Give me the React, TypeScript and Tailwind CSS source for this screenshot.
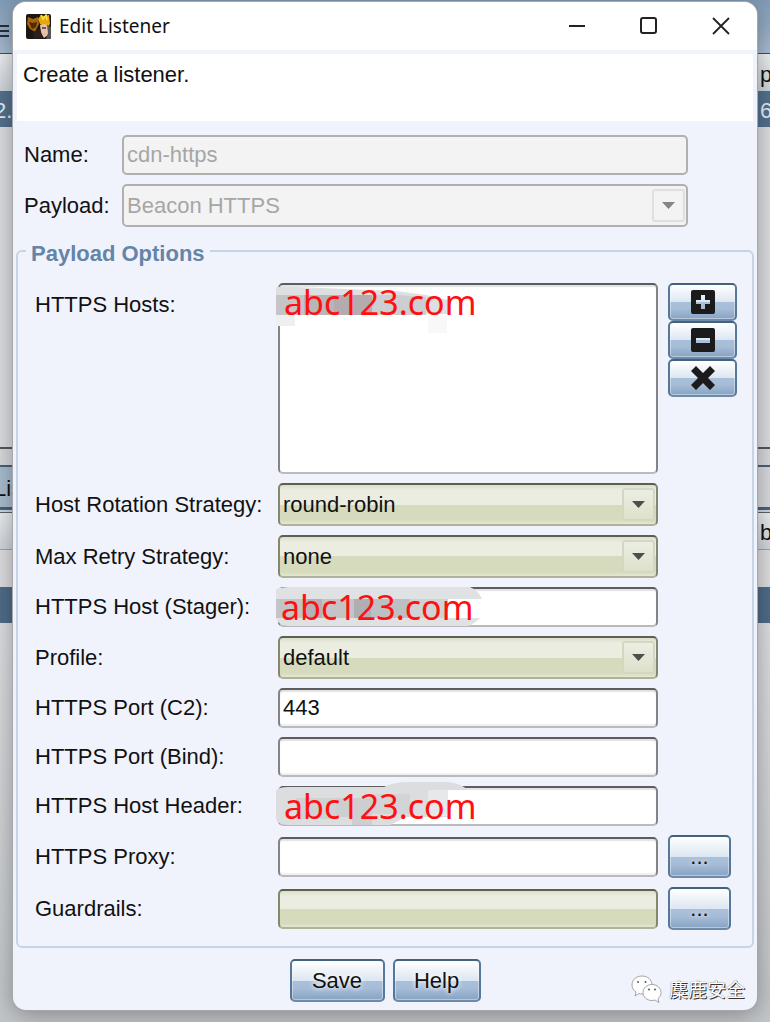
import { useState } from 'react'
import type { ReactNode } from 'react'
import clsx from 'clsx'

const fieldBorder = 'rounded-[5px] border-2 border-t-[#5c5d5f] border-x-[#838486] border-b-[#b9babc]'
const olive =
  'bg-[linear-gradient(#dcdfcd_0px,#eaeddf_5px,#eaeddf_50%,#d6dbbd_50%,#d6dbbd_90%,#e4e8d2_100%)]'
const oliveBorder = 'rounded-[5px] border-2 border-t-[#5d604f] border-x-[#84876f] border-b-[#b0b399]'
const glossy =
  'rounded-[5px] border-2 border-t-[#42627f] border-x-[#55779a] border-b-[#6e8aa8] bg-[linear-gradient(#ffffff_0%,#dce6f1_50%,#a9c0db_50%,#a6bcd7_70%,#86a3c3_100%)] shadow-[inset_0_0_0_1px_rgba(255,255,255,0.4)]'
const glow = '[text-shadow:0_0_4px_rgba(255,255,255,0.9),0_0_6px_rgba(255,255,255,0.7)]'

/* ─── Main window behind the dialog ─── */
interface BandProps {
  className: string
  left?: string
  right?: string
}

function Band({ className, left, right }: BandProps) {
  return (
    <div className={clsx('flex shrink-0 items-center justify-between whitespace-nowrap', className)}>
      <span className="-ml-[6px] pt-1">{left}</span>
      <span className="w-[10px] pt-1">{right}</span>
    </div>
  )
}

function Backdrop() {
  return (
    <div className="absolute inset-0 flex flex-col overflow-hidden bg-[#dcdee1]" aria-hidden="true">
      <div className="flex h-[53px] shrink-0 items-center bg-linear-to-b from-[#819bb6] to-[#a9bdd3]">
        <svg width="9" height="14" className="mt-2" stroke="#25303b" strokeWidth="2">
          <path d="M0 2h9M0 7h9M0 12h9" />
        </svg>
      </div>
      <Band className="h-[38px] border-t border-[#4a4d50] bg-linear-to-b from-[#eef0f2] to-[#cfd4d9]" right="p" />
      <Band className="h-9 bg-[#54718e] text-[#e8eef4]" left="2." right="6" />
      <Band className="h-80 bg-[#dcdee1]" />
      <Band className="h-[18px] border-t-2 border-[#55575a] bg-[#d8dadd]" />
      <Band className="h-11 border-y-2 border-[#45627f] bg-linear-to-r from-[#a9bdd0] from-50% to-[#d8dadd] to-50%" left="Lis" />
      <Band className="h-[41px] border-t-4 border-b border-double border-t-[#606265] border-b-[#8fa9c3] bg-linear-to-b from-[#eceef0] to-[#cfd5dc]" right="b" />
      <Band className="h-[37px] bg-[#dedee0]" />
      <Band className="h-9 bg-[#4f6c88]" />
      <Band className="flex-1 bg-linear-to-b from-[#dcdee1] to-[#c3c6c9]" />
    </div>
  )
}

/* ─── Fields ─── */
interface TextFieldProps {
  id: string
  initial?: string
  disabled?: boolean
  readOnly?: boolean
}

function TextField({ id, initial = '', disabled, readOnly }: TextFieldProps) {
  const [value, setValue] = useState(initial)
  return (
    <input
      id={id}
      value={value}
      disabled={disabled}
      readOnly={readOnly}
      onChange={(e) => setValue(e.target.value)}
      className={clsx(
        'h-10 w-full min-w-0 px-[3px] outline-none',
        disabled && 'rounded-[5px] border-2 border-[#b0b0b0] bg-[#f3f3f3] text-[#a6a6a6]',
        readOnly && [oliveBorder, olive],
        !disabled && !readOnly && [fieldBorder, 'bg-white shadow-[inset_0_2px_1px_#e3e3e5,inset_0_-2px_1px_#f0f0f0]'],
      )}
    />
  )
}

interface SelectFieldProps {
  id: string
  options: string[]
  disabled?: boolean
}

function SelectField({ id, options, disabled }: SelectFieldProps) {
  return (
    <div className="relative">
      <select
        id={id}
        disabled={disabled}
        className={clsx(
          'block h-[43px] w-full appearance-none px-[3px] opacity-100 outline-none',
          disabled
            ? 'rounded-[5px] border-2 border-[#b0b0b0] bg-[#f3f3f3] text-[#a6a6a6]'
            : [oliveBorder, olive],
        )}
      >
        {options.map((o) => (
          <option key={o}>{o}</option>
        ))}
      </select>
      <span
        className={clsx(
          'pointer-events-none absolute top-[5px] right-[3px] flex h-[33px] w-[33px] items-center justify-center rounded-[3px] border-2',
          disabled ? 'border-[#dfdfdf] bg-[#f3f3f3]' : 'border-[#d4d8c3] bg-linear-to-b from-[#ebeee2] to-[#dde1cb]',
        )}
      >
        <svg width="13" height="7" viewBox="0 0 13 7">
          <path d="M0 0h13L6.500 7z" fill={disabled ? '#858585' : '#4e4e4a'} />
        </svg>
      </span>
    </div>
  )
}

interface MaskedFieldProps {
  id: string
  multiline?: boolean
  indent?: boolean
  children: ReactNode
}

/* Censored value: smudge sits above the box, the replacement text on top of it */
function MaskedField({ id, multiline, indent, children }: MaskedFieldProps) {
  const [value, setValue] = useState('abc123.com')
  const text = clsx(
    'z-20 col-start-1 row-start-1 w-full min-w-0 resize-none bg-transparent text-[34px] text-[#ff0f0f] outline-none',
    "font-['Noto_Sans',sans-serif]",
    indent ? 'px-[6px]' : 'px-[3px]',
  )
  return (
    <div className={clsx('grid grid-rows-[100%]', multiline ? 'h-[191px]' : 'h-10')}>
      <div className={clsx('col-start-1 row-start-1 bg-white shadow-[inset_0_2px_1px_#e3e3e5]', fieldBorder)} />
      <svg className="z-10 col-start-1 row-start-1 -ml-[2px] h-10 w-[210px] overflow-visible">{children}</svg>
      {multiline ? (
        <textarea id={id} value={value} onChange={(e) => setValue(e.target.value)} className={clsx(text, 'leading-[38px]')} />
      ) : (
        <input id={id} value={value} onChange={(e) => setValue(e.target.value)} className={clsx(text, 'h-10')} />
      )}
    </div>
  )
}

interface RowProps {
  id: string
  label: string
  tall?: boolean
  children: ReactNode
  side?: ReactNode
}

function Row({ id, label, tall, children, side }: RowProps) {
  return (
    <div className="grid grid-cols-[233px_1fr_69px] items-center gap-x-[10px]">
      <label htmlFor={id} className={clsx('leading-10 whitespace-nowrap', tall && 'self-start pt-[2px]')}>
        {label}
      </label>
      {children}
      {side}
    </div>
  )
}

function BrowseButton({ label }: { label: string }) {
  return (
    <button type="button" aria-label={label} className={clsx('h-[43px] w-[63px]', glossy, glow)}>
      ...
    </button>
  )
}

function IconButton({ label, children }: { label: string; children: ReactNode }) {
  return (
    <button type="button" aria-label={label} className={clsx('flex h-[38px] items-center justify-center', glossy)}>
      <svg width="26" height="26" viewBox="0 0 26 26" fill="#1b1b1b">
        {children}
      </svg>
    </button>
  )
}

function AppIcon() {
  return (
    <svg width="25" height="25" viewBox="0 0 25 25">
      <rect width="25" height="25" rx="2" fill="#1d1714" />
      <path d="M2 3l5 2 5-2 1 7-4 8-5-3-3-5z" fill="#a66308" />
      <path d="M3 8l4 1 4-1-1 5-4 2z" fill="#4b2b08" />
      <path d="M12 5l3-4 3 1 5-1 1 9-3 4-7-4z" fill="#e3a810" />
      <path d="M15 1l2 4 3-4 1 5" fill="none" stroke="#fae03c" strokeWidth="1.500" />
      <path d="M14 11l5-1 3 3v8l-4 3-3-5z" fill="#e4c1aa" />
      <path d="M16 13h4v2h-4z" fill="#755849" />
      <path d="M21 11l4 2v12h-5l2-6z" fill="#555452" />
      <path d="M7 18l7-3 3 9-9 1z" fill="#2a201e" />
    </svg>
  )
}

function Watermark() {
  return (
    <div className="pointer-events-none absolute right-3 bottom-[7px] flex items-center gap-[6px]">
      <svg width="32" height="28" viewBox="0 0 32 28" fill="#fff" stroke="#8e9095" strokeWidth="0.800">
        <path d="M11 1C5 1 1 5 1 10c0 3 1.500 5.500 4 7l-1 4 4-2.500c1 .3 2 .5 3 .5 6 0 10-4 10-9s-4-9-10-9z" />
        <path d="M21 9.500c-5 0-9 3.500-9 8s4 8 9 8c1 0 2-.2 3-.5l4 2.500-1-4c2-1.500 3-3.500 3-6 0-4.500-4-8-9-8z" />
        <g fill="#55575b" stroke="none">
          <circle cx="7" cy="7" r="1" />
          <circle cx="14.500" cy="7" r="1" />
          <circle cx="18" cy="14.500" r="1" />
          <circle cx="24" cy="14.500" r="1" />
        </g>
      </svg>
      <span className="font-['Noto_Sans_CJK_SC',sans-serif] text-[19px] leading-7 text-white [text-shadow:1px_1px_0_#333,0_0_1px_#555]">
        麋鹿安全
      </span>
    </div>
  )
}

const windowButton = 'flex w-[72px] items-center justify-center'

export default function App() {
  return (
    <div className="relative min-h-screen px-[13px] pt-[2px] pb-3 font-['Liberation_Sans',Arial,sans-serif] text-[22px] leading-6 text-[#111]">
      <Backdrop />
      <main className="relative overflow-hidden rounded-[13px] bg-[#f0f3fb] shadow-[0_0_0_1px_#a5a7ab,0_4px_24px_rgba(0,0,0,0.35)]">
        <header className="flex h-12 bg-white pl-[13px]">
          <h1 className="flex flex-1 items-center gap-2 font-['Noto_Sans',sans-serif] text-[19px]">
            <AppIcon />
            Edit Listener
          </h1>
          <button type="button" aria-label="Minimize" className={windowButton}>
            <svg width="18" height="18" stroke="#222" strokeWidth="2">
              <path d="M1 9h16" />
            </svg>
          </button>
          <button type="button" aria-label="Maximize" className={windowButton}>
            <svg width="18" height="18" fill="none" stroke="#222" strokeWidth="2">
              <rect x="1" y="1" width="15" height="15" rx="2" />
            </svg>
          </button>
          <button type="button" aria-label="Close" className={windowButton}>
            <svg width="18" height="18" stroke="#222" strokeWidth="1.800">
              <path d="M1 1l16 16M17 1L1 17" />
            </svg>
          </button>
        </header>

        <p className="mx-1 mt-1 h-[67px] bg-white px-[6px] py-[9px]">Create a listener.</p>

        <form onSubmit={(e) => e.preventDefault()}>
          <div className="grid grid-cols-[88px_1fr] items-center gap-x-[10px] gap-y-[9px] pt-[14px] pr-[69px] pl-[11px]">
            <label htmlFor="name" className="leading-10">Name:</label>
            <TextField id="name" initial="cdn-https" disabled />
            <label htmlFor="payload" className="leading-10">Payload:</label>
            <SelectField id="payload" options={['Beacon HTTPS']} disabled />
          </div>

          <fieldset className="mx-[3px] mt-[9px] rounded-[6px] border-2 border-[#c6d5e5] pr-[15px] pb-4 pl-[17px]">
            <legend className="-ml-[9px] px-[5px] pt-[6px] font-bold text-[#6484a8]">Payload Options</legend>
            <div className="flex flex-col gap-[9px] pt-[17px]">
              <Row
                id="hosts"
                label="HTTPS Hosts:"
                tall
                side={
                  <div className="flex flex-col self-start">
                    <IconButton label="Add host">
                      <path
                        fillRule="evenodd"
                        d="M3 1h20q2 0 2 2v20q0 2-2 2H3q-2 0-2-2V3q0-2 2-2zm8 5v5H6v4h5v5h4v-5h5v-4h-5V6z"
                      />
                    </IconButton>
                    <IconButton label="Remove host">
                      <path
                        fillRule="evenodd"
                        d="M3 1h20q2 0 2 2v20q0 2-2 2H3q-2 0-2-2V3q0-2 2-2zm3 10v5h14v-5z"
                      />
                    </IconButton>
                    <IconButton label="Clear hosts">
                      <path d="M6 1l7 7 7-7 5 5-7 7 7 7-5 5-7-7-7 7-5-5 7-7-7-7z" />
                    </IconButton>
                  </div>
                }
              >
                <MaskedField id="hosts" multiline indent>
                  <path d="M0 4h20l100 4 30 4 22 5v14H0z" fill="#dedfe1" />
                  <path d="M0 12h28v20H0z" fill="#c5c4c6" />
                  <path d="M28 12h30v20H28z" fill="#b8b6b8" />
                  <path d="M58 12h38v20H58z" fill="#b3abae" />
                  <path d="M96 12h26l28 2v18H96z" fill="#cccfd1" />
                  <path d="M0 32h19v11H0z" fill="#efefef" />
                  <path d="M152 32h19v18h-19z" fill="#f8f8f8" />
                </MaskedField>
              </Row>
              <Row id="rotation" label="Host Rotation Strategy:">
                <SelectField id="rotation" options={['round-robin', 'random', 'failover']} />
              </Row>
              <Row id="retry" label="Max Retry Strategy:">
                <SelectField id="retry" options={['none']} />
              </Row>
              <Row id="stager" label="HTTPS Host (Stager):">
                <MaskedField id="stager">
                  <path d="M0 2q6-2 12-2h182q8 3 12 12h-34v19h32q-6 6-12 8H12Q2 38 0 31z" fill="#dfe1e3" />
                  <path d="M0 12h28v19H0z" fill="#c4c3c5" />
                  <path d="M28 12h18v19H28z" fill="#b5b1b4" />
                  <path d="M46 12h32v19H46z" fill="#c4c4c6" />
                  <path d="M78 12h17v19H78z" fill="#b0aeb3" />
                  <path d="M95 12h39v19H95z" fill="#bdc0c3" />
                  <path d="M134 12h38v19h-38z" fill="#d0d2d4" />
                </MaskedField>
              </Row>
              <Row id="profile" label="Profile:">
                <SelectField id="profile" options={['default']} />
              </Row>
              <Row id="port-c2" label="HTTPS Port (C2):">
                <TextField id="port-c2" initial="443" />
              </Row>
              <Row id="port-bind" label="HTTPS Port (Bind):">
                <TextField id="port-bind" />
              </Row>
              <Row id="header" label="HTTPS Host Header:">
                <MaskedField id="header" indent>
                  <path d="M0 5q2-4 12-4h96q10-5 24-5h40q12 1 20 8h-20v27h-42l-16 8H12Q0 39 0 32z" fill="#dcdddf" />
                  <path d="M20 12h40v21H20z" fill="#d0d1d3" />
                  <path d="M60 12h36v27H76v-8H60z" fill="#cdced0" />
                  <path d="M96 8h38v20H96z" fill="#d2d4d6" />
                  <path d="M152 4h20v26h-20z" fill="#e7e8ea" />
                </MaskedField>
              </Row>
              <Row id="proxy" label="HTTPS Proxy:" side={<BrowseButton label="Edit proxy" />}>
                <TextField id="proxy" />
              </Row>
              <Row id="guardrails" label="Guardrails:" side={<BrowseButton label="Edit guardrails" />}>
                <TextField id="guardrails" readOnly />
              </Row>
            </div>
          </fieldset>

          <div className="flex justify-center gap-2 pt-[11px] pb-2">
            <button type="submit" className={clsx('h-[43px] w-[95px]', glossy, glow)}>
              Save
            </button>
            <button type="button" className={clsx('h-[43px] w-[88px]', glossy, glow)}>
              Help
            </button>
          </div>
        </form>
        <Watermark />
      </main>
    </div>
  )
}
